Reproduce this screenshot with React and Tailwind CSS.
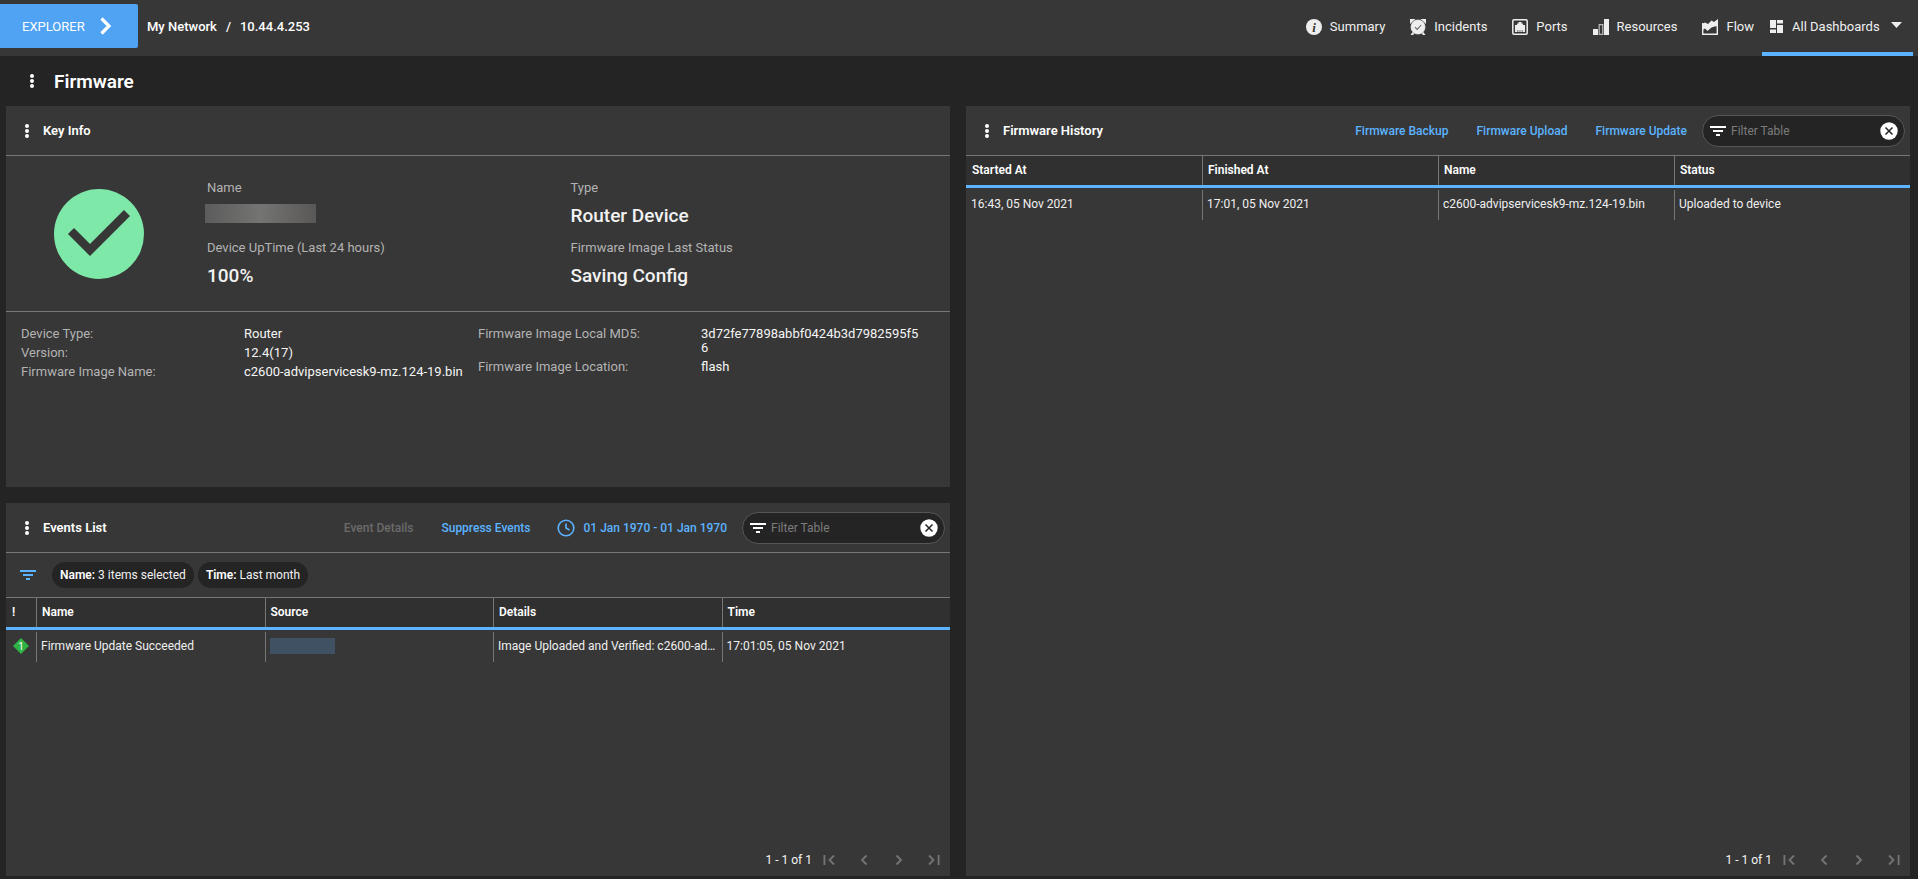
import React from "react";

function Dots() {
  return (
    <svg viewBox="0 0 6 16" className="h-4 w-[6px] fill-white" aria-hidden="true">
      <circle cx="3" cy="3" r="2" />
      <circle cx="3" cy="8" r="2" />
      <circle cx="3" cy="13" r="2" />
    </svg>
  );
}

function FilterIcon() {
  return (
    <svg viewBox="0 0 16 10" className="h-[10px] w-4 shrink-0" fill="currentColor" shapeRendering="crispEdges" aria-hidden="true">
      <path d="M0 0h16v2H0zM3 4h10v2H3zM6 8h4v2H6z" />
    </svg>
  );
}

function MenuButton({ label }) {
  return (
    <button type="button" aria-label={label} className="flex w-[10px] justify-center">
      <Dots />
    </button>
  );
}

function FilterBox({ id }) {
  return (
    <div className="flex h-8 w-[203px] shrink-0 items-center rounded-full border border-[#565656] bg-[#242424] pl-[7px] pr-[6px]">
      <label htmlFor={id} aria-label="Filter Table">
        <FilterIcon />
      </label>
      <input
        id={id}
        type="text"
        placeholder="Filter Table"
        className="ml-[5px] min-w-0 flex-1 bg-transparent text-xs text-white outline-none placeholder:text-[#7c7c7c]"
      />
      <button type="button" aria-label="Clear filter" className="shrink-0">
        <svg viewBox="0 0 18 18" className="h-[18px] w-[18px]" aria-hidden="true">
          <circle cx="9" cy="9" r="8.7" fill="#fff" />
          <path d="M5.5 5.5l7 7M12.5 5.5l-7 7" stroke="#242424" strokeWidth="1.5" />
        </svg>
      </button>
    </div>
  );
}

function PanelHeader({ title, children }) {
  return (
    <header className="flex h-[50px] shrink-0 items-center border-b border-[#777] pl-4 pr-[5px]">
      <MenuButton label={title + " menu"} />
      <h2 className="ml-[11px] text-[13px] font-semibold text-white">{title}</h2>
      <div className="ml-auto flex items-center">{children}</div>
    </header>
  );
}

const pagerPaths = [
  ["First page", "M2.4 2v10M12 2.5L7.5 7l4.5 4.5"],
  ["Previous page", "M9.5 2.5L5 7l4.5 4.5"],
  ["Next page", "M4.5 2.5L9 7l-4.5 4.5"],
  ["Last page", "M2 2.5L6.5 7 2 11.5M11.6 2v10"],
];

function Pager() {
  return (
    <footer className="mt-auto flex h-8 items-center justify-end pr-[9px] text-xs text-[#f5f5f5]">
      <span>1 - 1 of 1</span>
      <div className="ml-[10px] flex gap-[21px]">
        {pagerPaths.map(([label, d]) => (
          <button key={label} type="button" aria-label={label}>
            <svg viewBox="0 0 14 14" className="h-[14px] w-[14px]" fill="none" stroke="#757575" strokeWidth="1.8" aria-hidden="true">
              <path d={d} />
            </svg>
          </button>
        ))}
      </div>
    </footer>
  );
}

const icons = {
  Summary: (
    <>
      <circle cx="8" cy="8" r="8" fill="#eee" />
      <text x="8" y="12.5" textAnchor="middle" fontFamily="Liberation Serif, serif" fontStyle="italic" fontWeight="700" fontSize="13" fill="#373737">i</text>
    </>
  ),
  Incidents: (
    <>
      <path d="M0 0h5.5L0 5zM16 0h-5.500L16 5zM.5 16l2.500-3.500L5 14l-2 2zM15.500 16L13 12.500 11 14l2 2z" fill="#eee" />
      <circle cx="8" cy="8" r="7.5" fill="#eee" stroke="#373737" strokeWidth=".3" />
      <path d="M5 8.2l2.200 2.200L11.200 6" fill="none" stroke="#666" strokeWidth="1.1" />
    </>
  ),
  Ports: (
    <>
      <rect x=".8" y=".8" width="14.4" height="14.4" rx="1.2" fill="none" stroke="#eee" strokeWidth="1.5" />
      <path d="M3 13V6h2V4.500h1.500V3h3v1.500H11V6h2v7z" fill="#eee" />
      <path d="M5.500 13v-2M7.200 13v-2M8.900 13v-2M10.600 13v-2" stroke="#777" strokeWidth=".8" />
    </>
  ),
  Resources: (
    <>
      <path d="M0 10h5v6H0zM11 0h5v16h-5z" fill="#eee" />
      <path d="M6.200 5.600h3.600v9.800H6.200z" fill="none" stroke="#bbb" strokeWidth="1.2" />
    </>
  ),
  Flow: (
    <>
      <path d="M.7 4v11.300h14.600V2" fill="none" stroke="#eee" strokeWidth="1.4" />
      <path d="M0 11V5l3-1.500L6 5l3.500-3.500L12 3l4-3v7l-3.500.5-3 1L5.500 12 3 9.500z" fill="#eee" />
    </>
  ),
};

function NavIcon({ name }) {
  return (
    <svg viewBox="0 0 16 16" className="h-4 w-4" aria-hidden="true">
      {icons[name]}
    </svg>
  );
}

function Stat({ label, children }) {
  return (
    <div className="h-[60px]">
      <dt className="text-[13px] leading-4 text-[#b3b3b3]">{label}</dt>
      <dd className="mt-2 text-[19px] font-medium leading-6 text-[#f2f2f2]">{children}</dd>
    </div>
  );
}

function Info({ label, children }) {
  return (
    <div className="flex pb-[5px] pr-[10px] text-[13px] leading-[14px]">
      <dt className="w-[223px] shrink-0 text-[#b3b3b3]">{label}</dt>
      <dd className="min-w-0 flex-1 break-all text-[#f5f5f5]">{children}</dd>
    </div>
  );
}

function DataTable({ columns, rows, narrowFirst }) {
  return (
    <table className="w-full table-fixed border-separate border-spacing-0 text-xs">
      {narrowFirst && (
        <colgroup>
          <col className="w-[30px]" />
        </colgroup>
      )}
      <thead className="bg-[#303030] text-white">
        <tr className="h-8">
          {columns.map((c, i) => (
            <th key={c} scope="col" className="border-b-[3px] border-[#5cb3ff] p-0">
              <div className={"flex h-[29px] items-center pb-px font-semibold " + (i ? "border-l border-[#777] pl-[5px]" : "pl-[6px]")}>{c}</div>
            </th>
          ))}
        </tr>
      </thead>
      <tbody className="text-[#f0f0f0]">
        {rows.map((r, k) => (
          <tr key={k}>
            {r.map((c, i) => (
              <td key={i} className="px-0 pb-0 pt-[2px]">
                <div className={"h-[30px] truncate pr-[5px] leading-7 " + (i ? "border-l border-[#777] pl-1" : "pl-[5px]")}>{c}</div>
              </td>
            ))}
          </tr>
        ))}
      </tbody>
    </table>
  );
}

const link = "text-xs font-medium text-[#5cb3ff]";

export default function App() {
  return (
    <div className="flex min-h-screen flex-col bg-[#242424] font-['Roboto',sans-serif] text-white">
      <header className="flex h-14 shrink-0 items-start bg-[#373737] pr-[5px]">
        <button type="button" className="mt-1 flex h-11 w-[138px] items-center rounded-r-xs bg-[#4fa3f2] pl-[22px] text-[13px]">
          <span className="pt-px">EXPLORER</span>
          <svg viewBox="0 0 12 18" className="ml-[15px] h-[18px] w-3" fill="none" stroke="#fff" strokeWidth="3.2" aria-hidden="true">
            <path d="M1.5 1.5L9 9l-7.500 7.500" />
          </svg>
        </button>
        <nav aria-label="Breadcrumb" className="ml-[9px] mt-1 flex h-11 items-center gap-[9px] pt-[2px] text-[13px] font-medium">
          <a href="#network">My Network</a>
          <span>/</span>
          <span>10.44.4.253</span>
        </nav>
        <nav aria-label="Dashboards" className="ml-auto flex h-14 text-[13px] text-[#f0f0f0]">
          <div className="mr-2 flex h-[52px] items-center gap-[25px] pt-px">
            {Object.keys(icons).map((n) => (
              <a key={n} href={"#" + n.toLowerCase()} className="flex items-center gap-2">
                <NavIcon name={n} />
                <span className="pt-px">{n}</span>
              </a>
            ))}
          </div>
          <button type="button" className="flex h-14 w-[151px] items-center border-b-4 border-[#5cb3ff] pl-2 pt-px">
            <svg viewBox="0 0 13 13" className="mr-[9px] h-[13px] w-[13px]" fill="#eee" aria-hidden="true">
              <path d="M0 0h6v8H0zM0 9.5h6V13H0zM7 0h6v3.500H7zM7 5h6v8H7z" />
            </svg>
            <span className="pt-px">All Dashboards</span>
            <svg viewBox="0 0 11 6" className="mb-[3px] ml-[11px] h-[6px] w-[11px]" fill="#eee" aria-hidden="true">
              <path d="M0 0h11L5.5 6z" />
            </svg>
          </button>
        </nav>
      </header>

      <div className="flex h-[50px] shrink-0 items-center pl-[27px]">
        <MenuButton label="Dashboard menu" />
        <h1 className="ml-[17px] pt-[2px] text-[19px] font-semibold">Firmware</h1>
      </div>

      <main className="grid flex-1 grid-cols-2 gap-4 pb-[3px] pl-[6px] pr-2">
        <div className="flex min-w-0 flex-col gap-4">
          <section className="flex min-h-[381px] flex-col bg-[#373737]">
            <PanelHeader title="Key Info" />
            <div className="flex h-[156px] shrink-0 border-b border-[#777] pl-12 pr-4 pt-6">
              <svg viewBox="0 0 90 90" className="mr-[63px] mt-[9px] h-[90px] w-[90px] shrink-0" role="img" aria-label="Device up">
                <circle cx="45" cy="45" r="45" fill="#7de8a8" />
                <path d="M17 42l19 19L73 24" fill="none" stroke="#373737" strokeWidth="8.5" />
              </svg>
              <dl className="grid flex-1 grid-cols-2 content-start">
                <Stat label="Name">
                  <span role="img" aria-label="Hidden name" className="-ml-[2px] block h-[19px] w-[111px] bg-linear-to-r from-[#5c5c5c] via-[#747472] to-[#5a5856]" />
                </Stat>
                <Stat label="Type">Router Device</Stat>
                <Stat label="Device UpTime (Last 24 hours)">100%</Stat>
                <Stat label="Firmware Image Last Status">Saving Config</Stat>
              </dl>
            </div>
            <div className="grid grid-cols-2 px-[15px] pb-4 pt-[15px]">
              <dl>
                <Info label="Device Type:">Router</Info>
                <Info label="Version:">12.4(17)</Info>
                <Info label="Firmware Image Name:">
                  <span className="whitespace-nowrap">c2600-advipservicesk9-mz.124-19.bin</span>
                </Info>
              </dl>
              <dl>
                <Info label="Firmware Image Local MD5:">3d72fe77898abbf0424b3d7982595f56</Info>
                <Info label="Firmware Image Location:">flash</Info>
              </dl>
            </div>
          </section>

          <section className="flex flex-1 flex-col bg-[#373737]">
            <PanelHeader title="Events List">
              <button type="button" disabled className="mr-7 text-xs font-medium text-[#6b6b6b]">Event Details</button>
              <button type="button" className={link + " mr-[26px]"}>Suppress Events</button>
              <button type="button" className={link + " mr-[15px] flex items-center gap-[9px]"}>
                <svg viewBox="0 0 18 18" className="h-[18px] w-[18px]" fill="none" stroke="#5cb3ff" strokeWidth="1.6" aria-hidden="true">
                  <circle cx="9" cy="9" r="7.8" />
                  <path d="M9 4.5V9l3.500 2" />
                </svg>
                01 Jan 1970 - 01 Jan 1970
              </button>
              <FilterBox id="events-filter" />
            </PanelHeader>
            <div className="flex h-[45px] shrink-0 items-center border-b border-[#777] pl-[14px] text-xs text-[#f0f0f0]">
              <button type="button" aria-label="Filters" className="mr-4 text-[#5cb3ff]">
                <FilterIcon />
              </button>
              <ul className="flex gap-1">
                <li className="flex h-[26px] items-center rounded-full bg-[#242424] px-2">
                  <b className="font-semibold text-white">Name:</b>&nbsp;3 items selected
                </li>
                <li className="flex h-[26px] items-center rounded-full bg-[#242424] px-2">
                  <b className="font-semibold text-white">Time:</b>&nbsp;Last month
                </li>
              </ul>
            </div>
            <DataTable
              narrowFirst
              columns={["!", "Name", "Source", "Details", "Time"]}
              rows={[[
                <svg viewBox="0 0 16 16" className="ml-[2px] mt-[6px] h-4 w-4" role="img" aria-label="Severity 1">
                  <path d="M8 0l8 8-8 8-8-8z" fill="#2fb344" />
                  <text x="8" y="11.5" textAnchor="middle" fontFamily="Roboto, sans-serif" fontSize="10" fill="#fff">1</text>
                </svg>,
                "Firmware Update Succeeded",
                <span role="img" aria-label="Hidden source" className="mt-[6px] block h-4 w-[65px] bg-[#3f5163]" />,
                "Image Uploaded and Verified: c2600-advipservicesk9-mz.124-19.bin",
                "17:01:05, 05 Nov 2021",
              ]]}
            />
            <Pager />
          </section>
        </div>

        <section className="flex min-w-0 flex-col bg-[#373737]">
          <PanelHeader title="Firmware History">
            <button type="button" className={link + " mr-7"}>Firmware Backup</button>
            <button type="button" className={link + " mr-7"}>Firmware Upload</button>
            <button type="button" className={link + " mr-[15px]"}>Firmware Update</button>
            <FilterBox id="history-filter" />
          </PanelHeader>
          <DataTable
            columns={["Started At", "Finished At", "Name", "Status"]}
            rows={[["16:43, 05 Nov 2021", "17:01, 05 Nov 2021", "c2600-advipservicesk9-mz.124-19.bin", "Uploaded to device"]]}
          />
          <Pager />
        </section>
      </main>
    </div>
  );
}
